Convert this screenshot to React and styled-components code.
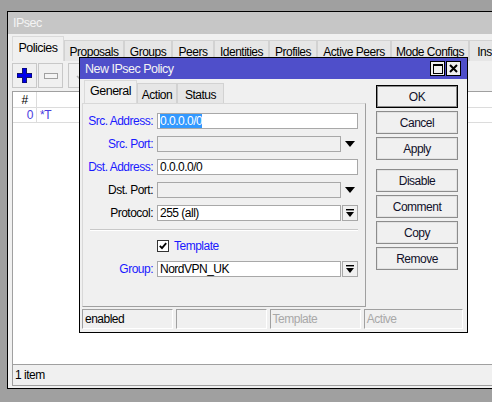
import styled, { createGlobalStyle, css } from "styled-components";

const GlobalStyle = createGlobalStyle`
  html, body {
    margin: 0;
    padding: 0;
    width: 492px;
    height: 402px;
    overflow: hidden;
    background: #a0a0a0;
    font-family: "Liberation Sans", Arial, sans-serif;
    font-size: 12px;
    letter-spacing: -0.5px;
    color: #000;
  }
  * { box-sizing: border-box; }
`;

const mainTabs = [
  { label: "Policies", w: 52, active: true },
  { label: "Proposals", w: 60 },
  { label: "Groups", w: 48 },
  { label: "Peers", w: 42 },
  { label: "Identities", w: 55 },
  { label: "Profiles", w: 48 },
  { label: "Active Peers", w: 74 },
  { label: "Mode Configs", w: 78 },
  { label: "Installed SAs", w: 80 },
];

const dialogTabs = [
  { label: "General", w: 53, active: true },
  { label: "Action", w: 40 },
  { label: "Status", w: 47 },
];

const BLUE = "#1a1aff";

const Window = styled.div`
  position: absolute;
  display: flex;
  flex-direction: column;
  border: 1px solid #000;
  background: #f0f0f0;
`;

const MainWindow = styled(Window)`
  left: 7px;
  top: 11px;
  width: 520px;
  height: 378px;
`;

const DialogWindow = styled(Window)`
  left: 79px;
  top: 57px;
  width: 389px;
  height: 276px;
`;

const TitleBar = styled.div`
  display: flex;
  align-items: center;
  justify-content: space-between;
  height: ${(p) => (p.$active ? 21 : 22)}px;
  padding: 0 6px 0 5px;
  background: ${(p) => (p.$active ? "#4f4fca" : "#c6c6c6")};
  color: #f4f4f4;
  font-size: 12.5px;
  flex-shrink: 0;
`;

const Controls = styled.div`
  display: flex;
  gap: 1px;
`;

const CtrlBox = styled.div`
  width: 15px;
  height: 15px;
  border: 1px solid #000;
  background: #f0f0f0;
  display: flex;
  align-items: center;
  justify-content: center;
`;

const MainBody = styled.div`
  flex: 1;
  display: flex;
  flex-direction: column;
  padding: 2px 0 2px 4px;
  min-height: 0;
`;

const TabStrip = styled.div`
  display: flex;
  align-items: flex-end;
  height: ${(p) => p.$h}px;
  flex-shrink: 0;
  padding-left: ${(p) => p.$pad || 0}px;
`;

const Tab = styled.div`
  display: flex;
  align-items: center;
  justify-content: center;
  flex-shrink: 0;
  white-space: nowrap;
  overflow: hidden;
  border: 1px solid #d2d2d2;
  border-bottom: none;
  ${(p) =>
    p.$active
      ? css`
          background: #f0f0f0;
          height: 100%;
          padding-bottom: 2px;
          border-color: #dadada;
          font-size: 12.5px;
        `
      : css`
          background: #e6e6e6;
          height: calc(100% - ${p.$drop}px);
          padding-top: 2px;
        `}
`;

const TabPage = styled.div`
  flex: 1;
  display: flex;
  flex-direction: column;
  min-height: 0;
`;

const Toolbar = styled.div`
  display: flex;
  gap: 1px;
  padding-top: 2px;
  height: 27px;
  flex-shrink: 0;
`;

const ToolButton = styled.div`
  width: 25px;
  height: 25px;
  border: 1px solid #c8c8c8;
  background: #f0f0f0;
  display: flex;
  align-items: center;
  justify-content: center;
  margin-left: ${(p) => p.$gap || 0}px;
`;

const Table = styled.div`
  margin-top: 3px;
  flex: 1;
  background: #fff;
  border: 1px solid #a0a0a0;
  border-bottom: none;
  display: flex;
  flex-direction: column;
`;

const TRow = styled.div`
  display: flex;
  height: ${(p) => (p.$header ? 16 : 15)}px;
  border-bottom: 1px solid #dcdcdc;
  color: ${(p) => (p.$header ? "#000" : "#4a3ce0")};
`;

const Cell = styled.div`
  width: ${(p) => (p.$w ? `${p.$w}px` : "auto")};
  flex: ${(p) => (p.$w ? "none" : 1)};
  display: flex;
  align-items: center;
  justify-content: ${(p) => p.$align || "flex-start"};
  padding: 0 3px;
  border-right: ${(p) => (p.$w ? "1px solid #dcdcdc" : "none")};
`;

const MainStatus = styled.div`
  height: 22px;
  border: 1px solid #a0a0a0;
  border-right: none;
  display: flex;
  align-items: center;
  padding-left: 2px;
  flex-shrink: 0;
`;

const DialogBody = styled.div`
  display: flex;
  padding: 1px 0 0 2px;
  flex: 1;
  min-height: 0;
`;

const LeftCol = styled.div`
  width: 284px;
  display: flex;
  flex-direction: column;
`;

const Panel = styled.div`
  height: 204px;
  border: 1px solid #a0a0a0;
  border-top-color: #d8d8d8;
  border-left-color: #d8d8d8;
  display: flex;
  flex-direction: column;
  gap: 7px;
  padding: 9px 7px 0 0;
`;

const FormRow = styled.div`
  display: flex;
  align-items: center;
  height: 16px;
`;

const Label = styled.div`
  width: 70px;
  margin-right: 4px;
  text-align: right;
  white-space: nowrap;
  color: ${(p) => (p.$blue ? BLUE : "#000")};
`;

const Input = styled.div`
  height: 16px;
  width: ${(p) => p.$w}px;
  border: 1px solid #a8a8a8;
  background: ${(p) => (p.$disabled ? "#f0f0f0" : "#fff")};
  display: flex;
  align-items: center;
  padding-left: 2px;
  white-space: nowrap;
  overflow: hidden;
`;

const Selected = styled.span`
  background: #3399ff;
  color: #fff;
`;

const ArrowSlot = styled.div`
  width: 17px;
  height: 16px;
  display: flex;
  align-items: center;
  justify-content: center;
`;

const DropButton = styled.div`
  width: 16px;
  height: 16px;
  margin-left: 1px;
  border: 1px solid #a8a8a8;
  background: #f0f0f0;
  display: flex;
  align-items: center;
  justify-content: center;
`;

const Separator = styled.div`
  height: 2px;
  margin: 1px 0 0 7px;
  border-top: 1px solid #c8c8c8;
  border-bottom: 1px solid #fff;
`;

const Spacer = styled.div`
  width: 74px;
`;

const CheckBox = styled.div`
  width: 12px;
  height: 12px;
  border: 1px solid #333;
  background: #fff;
  display: flex;
  align-items: center;
  justify-content: center;
  margin-right: 5px;
`;

const CheckLabel = styled.span`
  color: ${BLUE};
`;

const ButtonCol = styled.div`
  display: flex;
  flex-direction: column;
  gap: 3px;
  padding-top: 5px;
  margin-left: 10px;
`;

const Button = styled.div`
  width: 82px;
  height: 23px;
  display: flex;
  align-items: center;
  justify-content: center;
  background: #f0f0f0;
  border: 1px solid ${(p) => (p.$default ? "#000" : "#8c8c8c")};
  box-shadow: inset 0 0 0 1px ${(p) => (p.$default ? "#8c8c8c" : "#e2e2e2")};
  margin-top: ${(p) => (p.$spaced ? 6 : 0)}px;
  color: #10102a;
`;

const DialogStatus = styled.div`
  display: flex;
  gap: 3px;
  padding: 2px 4px 3px 2px;
  flex-shrink: 0;
`;

const StatusCell = styled.div`
  width: ${(p) => p.$w}px;
  height: 20px;
  border-top: 1px solid #a0a0a0;
  border-left: 1px solid #a0a0a0;
  border-right: 1px solid #fff;
  border-bottom: 1px solid #fff;
  display: flex;
  align-items: center;
  padding-left: 2px;
  color: ${(p) => (p.$dim ? "#a8a8a8" : "#000")};
`;

const DownTriangle = () => (
  <svg width="10" height="6" viewBox="0 0 10 6">
    <path d="M0 0H10L5 6Z" fill="#000" />
  </svg>
);

const DropIcon = () => (
  <svg width="8" height="8" viewBox="0 0 8 8">
    <rect x="0" y="0" width="8" height="1.4" fill="#000" />
    <path d="M0 3H8L4 8Z" fill="#000" />
  </svg>
);

const FormField = ({ label, blue, value, selected, kind }) => (
  <FormRow>
    <Label $blue={blue}>{label}</Label>
    {kind === "text" && (
      <Input $w={201}>{selected ? <Selected>{value}</Selected> : value}</Input>
    )}
    {kind === "combo" && (
      <>
        <Input $w={184} $disabled>
          {value}
        </Input>
        <ArrowSlot>
          <DownTriangle />
        </ArrowSlot>
      </>
    )}
    {kind === "select" && (
      <>
        <Input $w={184}>{value}</Input>
        <DropButton>
          <DropIcon />
        </DropButton>
      </>
    )}
  </FormRow>
);

export default function App() {
  return (
    <>
      <GlobalStyle />
      <MainWindow>
        <TitleBar>IPsec</TitleBar>
        <MainBody>
          <TabStrip $h={25}>
            {mainTabs.map((t) => (
              <Tab key={t.label} $active={t.active} $drop={4} style={{ width: t.w }}>
                {t.label}
              </Tab>
            ))}
          </TabStrip>
          <TabPage>
            <Toolbar>
              <ToolButton>
                <svg width="15" height="15" viewBox="0 0 15 15">
                  <path d="M5.5 0H9.5V5.5H15V9.5H9.5V15H5.5V9.5H0V5.5H5.5Z" fill="#0000e8" stroke="#000040" strokeWidth="0.8" />
                </svg>
              </ToolButton>
              <ToolButton>
                <svg width="14" height="6" viewBox="0 0 14 6">
                  <rect x="0.5" y="0.5" width="13" height="5" fill="#f4f4f4" stroke="#a0a0a0" />
                </svg>
              </ToolButton>
              <ToolButton $gap={4}>
                <svg width="10" height="8" viewBox="0 0 10 8">
                  <path d="M1 4L4 7L9 1" fill="none" stroke="#b0b0b0" strokeWidth="1.5" />
                </svg>
              </ToolButton>
            </Toolbar>
            <Table>
              <TRow $header>
                <Cell $w={24} $align="center">#</Cell>
                <Cell />
              </TRow>
              <TRow>
                <Cell $w={24} $align="flex-end">0</Cell>
                <Cell>*T</Cell>
              </TRow>
            </Table>
            <MainStatus>1 item</MainStatus>
          </TabPage>
        </MainBody>
      </MainWindow>

      <DialogWindow>
        <TitleBar $active>
          New IPsec Policy
          <Controls>
            <CtrlBox>
              <svg width="10" height="10" viewBox="0 0 10 10">
                <rect x="0.5" y="0.5" width="9" height="9" fill="none" stroke="#000" />
                <rect x="0" y="0" width="10" height="2" fill="#000" />
              </svg>
            </CtrlBox>
            <CtrlBox>
              <svg width="9" height="9" viewBox="0 0 9 9">
                <path d="M1 1L8 8M8 1L1 8" stroke="#000" strokeWidth="2" />
              </svg>
            </CtrlBox>
          </Controls>
        </TitleBar>
        <DialogBody>
          <LeftCol>
            <TabStrip $h={23} $pad={2}>
              {dialogTabs.map((t) => (
                <Tab key={t.label} $active={t.active} $drop={3} style={{ width: t.w }}>
                  {t.label}
                </Tab>
              ))}
            </TabStrip>
            <Panel>
              <FormField label="Src. Address:" blue kind="text" value="0.0.0.0/0" selected />
              <FormField label="Src. Port:" blue kind="combo" value="" />
              <FormField label="Dst. Address:" blue kind="text" value="0.0.0.0/0" />
              <FormField label="Dst. Port:" kind="combo" value="" />
              <FormField label="Protocol:" kind="select" value="255 (all)" />
              <Separator />
              <FormRow>
                <Spacer />
                <CheckBox>
                  <svg width="8" height="8" viewBox="0 0 8 8">
                    <path d="M0.8 3.8L3 6.2L7.2 1.2" fill="none" stroke="#000" strokeWidth="1.8" />
                  </svg>
                </CheckBox>
                <CheckLabel>Template</CheckLabel>
              </FormRow>
              <FormField label="Group:" blue kind="select" value="NordVPN_UK" />
            </Panel>
          </LeftCol>
          <ButtonCol>
            <Button $default>OK</Button>
            <Button>Cancel</Button>
            <Button>Apply</Button>
            <Button $spaced>Disable</Button>
            <Button>Comment</Button>
            <Button>Copy</Button>
            <Button>Remove</Button>
          </ButtonCol>
        </DialogBody>
        <DialogStatus>
          <StatusCell $w={92}>enabled</StatusCell>
          <StatusCell $w={91} />
          <StatusCell $w={92} $dim>Template</StatusCell>
          <StatusCell $w={100} $dim>Active</StatusCell>
        </DialogStatus>
      </DialogWindow>
    </>
  );
}
